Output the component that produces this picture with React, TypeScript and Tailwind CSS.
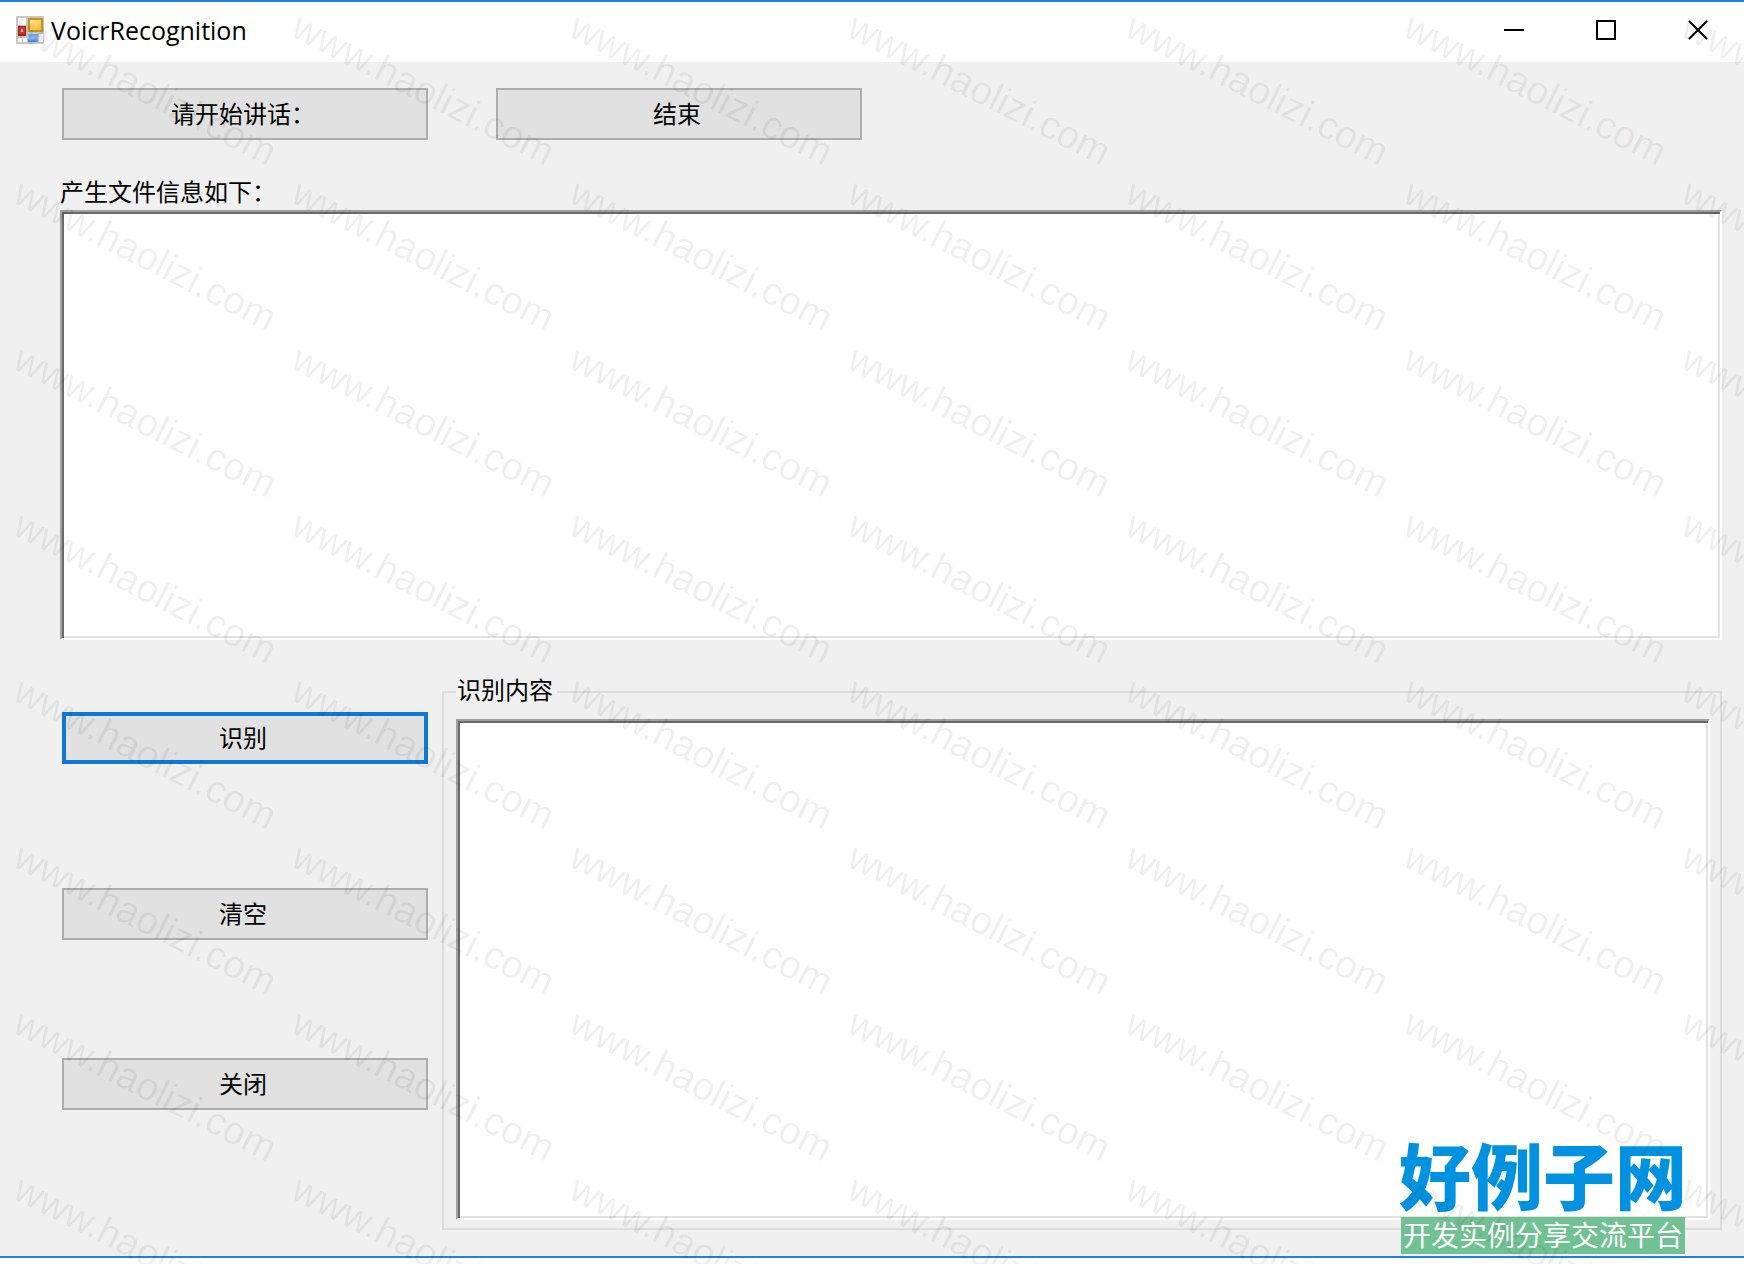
import { useState } from "react";

const WATERMARKS = Array.from({ length: 56 }, (_, i) => i);

const sunken =
  "block w-full resize-none border-2 border-t-[#a0a0a0] border-l-[#a0a0a0] border-r-white border-b-white bg-white p-2 shadow-[inset_2px_2px_0_#696969,inset_-2px_-2px_0_#e3e3e3] outline-none";

type FormButtonProps = {
  label: string;
  focused?: boolean;
  className?: string;
  onClick?: () => void;
};

function FormButton({ label, focused, className = "", onClick }: FormButtonProps) {
  return (
    <button
      type="button"
      onClick={onClick}
      className={`h-[52px] w-[366px] shrink-0 bg-[#e1e1e1] pr-1 pb-[2px] text-center ${
        focused ? "border-4 border-[#0f78d7]" : "border-2 border-[#adadad]"
      } ${className}`}
    >
      {label}
    </button>
  );
}

function AppIcon() {
  return (
    <svg width="28" height="28" viewBox="0 0 28 28" aria-hidden="true">
      <defs>
        <linearGradient id="gold" x1="0" y1="0" x2="1" y2="1">
          <stop offset="0" stopColor="#ffe9a0" />
          <stop offset="1" stopColor="#f7b924" />
        </linearGradient>
        <linearGradient id="blue" x1="0" y1="0" x2="0" y2="1">
          <stop offset="0" stopColor="#6d9ee8" />
          <stop offset="0.5" stopColor="#8db8f8" />
          <stop offset="1" stopColor="#4f82dc" />
        </linearGradient>
      </defs>
      <rect width="28" height="28" rx="1" fill="#c6c6c6" />
      <rect x="2" y="2" width="8" height="7" fill="#fbfbfb" />
      <rect x="2" y="22" width="4" height="4" fill="#f6f6f6" />
      <rect x="7" y="22" width="4" height="4" fill="#f6f6f6" />
      <rect x="23" y="18" width="4" height="8" fill="#ececec" />
      <rect x="2" y="10" width="8" height="10" fill="#b3201c" />
      <rect x="3" y="11" width="6" height="7" fill="#c93a34" />
      <rect x="5" y="13" width="2" height="3" fill="#f0a8a0" />
      <rect x="12" y="2" width="15" height="14" fill="#c39218" />
      <rect x="14" y="4" width="11" height="10" fill="url(#gold)" />
      <rect x="12" y="18" width="10" height="8" fill="url(#blue)" />
    </svg>
  );
}

function TitleBar() {
  return (
    <header className="flex h-[60px] items-center bg-white pb-1 pl-4">
      <AppIcon />
      <h1 className="ml-[7px] font-['Open_Sans','Noto_Sans',sans-serif] text-[25px] leading-8">
        VoicrRecognition
      </h1>
      <div className="ml-auto flex">
        <button type="button" aria-label="Minimize" className="flex h-14 w-[92px] items-center justify-center">
          <svg width="20" height="20" viewBox="0 0 20 20">
            <path d="M0 10H20" stroke="#000" strokeWidth="2" />
          </svg>
        </button>
        <button type="button" aria-label="Maximize" className="flex h-14 w-[92px] items-center justify-center">
          <svg width="20" height="20" viewBox="0 0 20 20">
            <rect x="1" y="1" width="18" height="18" fill="none" stroke="#000" strokeWidth="2" />
          </svg>
        </button>
        <button type="button" aria-label="Close" className="flex h-14 w-[92px] items-center justify-center">
          <svg width="20" height="20" viewBox="0 0 20 20">
            <path d="M1 1L19 19M19 1L1 19" stroke="#000" strokeWidth="2" />
          </svg>
        </button>
      </div>
    </header>
  );
}

function Watermark() {
  return (
    <div
      aria-hidden="true"
      className="pointer-events-none absolute inset-0 grid auto-rows-[166px] grid-cols-[repeat(7,278px)] overflow-hidden pt-[6px] pl-[26px]"
    >
      {WATERMARKS.map((i) => (
        <span
          key={i}
          className="h-10 origin-top-left rotate-[27deg] font-['Liberation_Sans',Arial,sans-serif] text-[39px] leading-none whitespace-nowrap text-black/7"
        >
          www.haolizi.com
        </span>
      ))}
    </div>
  );
}

function SiteLogo() {
  return (
    <div className="absolute right-[59px] bottom-[10px] w-[284px]">
      <div className="-ml-[2px] pb-[7px] text-[72px] leading-[74px] font-black whitespace-nowrap text-[#0092e0]">
        好例子网
      </div>
      <div className="bg-[#71c292] pb-[2px] text-center text-[28px] leading-[35px] whitespace-nowrap text-white">
        开发实例分享交流平台
      </div>
    </div>
  );
}

export default function App() {
  const [fileInfo, setFileInfo] = useState("");
  const [result, setResult] = useState("");

  const handleClear = () => {
    setFileInfo("");
    setResult("");
  };

  return (
    <div className="relative flex min-h-screen flex-col overflow-hidden bg-white pb-[6px] font-['Noto_Sans_CJK_SC',sans-serif] text-[24px] leading-7 text-black">
      <div className="flex flex-1 flex-col border-y-2 border-[#2182d3] bg-[#f0f0f0]">
        <TitleBar />
        <main className="flex flex-1 flex-col pt-[26px] pr-[22px] pb-[26px] pl-[60px]">
          <div className="flex gap-[68px] pl-[2px]">
            <FormButton label="请开始讲话：" />
            <FormButton label="结束" />
          </div>

          <label htmlFor="file-info" className="mt-[37px] mb-[5px]">
            产生文件信息如下：
          </label>
          <textarea
            id="file-info"
            value={fileInfo}
            onChange={(e) => setFileInfo(e.target.value)}
            className={`h-[430px] ${sunken}`}
          />

          <div className="mt-[35px] flex flex-1 gap-[14px] pl-[2px]">
            <div className="flex flex-col pt-[37px]">
              <FormButton label="识别" focused />
              <FormButton label="清空" className="mt-[124px]" onClick={handleClear} />
              <FormButton label="关闭" className="mt-[118px]" />
            </div>
            <fieldset className="flex flex-1 flex-col border-2 border-[#dcdcdc] pt-[10px] pr-[10px] pb-2 pl-3">
              <legend className="pr-1 pb-[6px] pl-px">识别内容</legend>
              <textarea
                aria-label="识别内容"
                value={result}
                onChange={(e) => setResult(e.target.value)}
                className={`flex-1 ${sunken}`}
              />
            </fieldset>
          </div>
        </main>
      </div>
      <SiteLogo />
      <Watermark />
    </div>
  );
}
